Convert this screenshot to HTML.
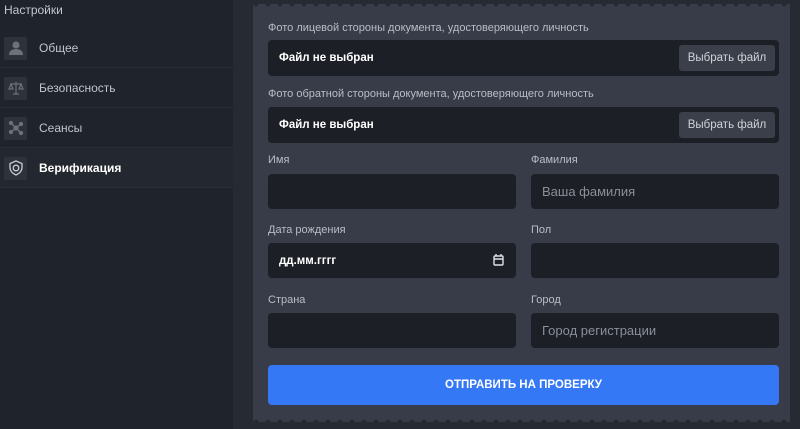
<!DOCTYPE html>
<html><head><meta charset="utf-8"><style>
*{box-sizing:border-box;margin:0;padding:0}
body{width:800px;height:429px;overflow:hidden;background:#262a33;font-family:"Liberation Sans",sans-serif;position:relative}
.sb{position:absolute;left:0;top:0;width:233px;height:429px;background:#1f232b}
.sb h1{font-size:12px;font-weight:normal;color:#c3c7cf;position:absolute;left:4px;top:3px}
.it{position:absolute;left:0;width:233px;height:40px;border-bottom:1px solid #2a2e37;display:flex;align-items:center;font-size:12px;color:#c0c4cc;padding-top:1px}
.it.a{background:#23272f;color:#fff;font-weight:bold}
.ic{width:23px;height:23px;background:#2e323b;border-radius:2px;margin:0 12px 0 4px;display:flex;align-items:center;justify-content:center}
.pn{position:absolute;left:253px;top:4px;width:537px;height:418px;background:#373c48}
.sc{position:absolute;left:253px;width:537px;height:6px;background:radial-gradient(circle at 3px 3px,#262a33 2.2px,transparent 2.6px) 0 0/12px 6px repeat-x}
.lb{position:absolute;font-size:11px;color:#b9bdc6}
.in{position:absolute;background:#1c1f26;border-radius:4px;height:35px;color:#8a8f99;font-size:13px;display:flex;align-items:center;padding-left:11px}
.fi{color:#fff;font-weight:bold;font-size:11.5px}
.bt{position:absolute;right:4px;top:5px;height:26px;width:96px;background:#3a3f4a;border-radius:3px;color:#d0d3d9;font-size:11.5px;display:flex;align-items:center;justify-content:center;font-weight:normal}
.sub{position:absolute;left:268px;top:365px;width:511px;height:40px;background:#3478f6;border-radius:4px;color:#fff;font-weight:bold;font-size:11.5px;display:flex;align-items:center;justify-content:center}
</style></head><body>
<div class="sb"><h1>Настройки</h1>
<div class="it" style="top:28px"><div class="ic"><svg width="16" height="16" viewBox="0 0 16 16"><circle cx="8" cy="5" r="3.5" fill="#6c717b"/><path d="M1 15c0-4 3-6 7-6s7 2 7 6z" fill="#6c717b"/></svg></div>Общее</div>
<div class="it" style="top:68px"><div class="ic"><svg width="16" height="16" viewBox="0 0 16 16" fill="none" stroke="#6c717b" stroke-width="1.2"><path d="M8 2v12M3 4h10M5 14h6M3 4l-2 5h4zM13 4l-2 5h4z"/></svg></div>Безопасность</div>
<div class="it" style="top:108px"><div class="ic"><svg width="16" height="16" viewBox="0 0 16 16" stroke="#6c717b" stroke-width="1.3" fill="#6c717b"><path d="M8 8L3 3M8 8l5-4M8 8l-5 4M8 8l5 5"/><circle cx="8" cy="8" r="2"/><circle cx="3" cy="3" r="1.5"/><circle cx="13" cy="4" r="1.5"/><circle cx="3" cy="12" r="1.5"/><circle cx="13" cy="13" r="1.5"/></svg></div>Сеансы</div>
<div class="it a" style="top:148px"><div class="ic"><svg width="16" height="16" viewBox="0 0 16 16" fill="none" stroke="#c9ccd2" stroke-width="1.3"><path d="M8 1l6 2.5v4c0 3.5-2.7 6-6 7.5C4.7 13.5 2 11 2 7.5v-4z"/><circle cx="8" cy="8" r="2.8"/></svg></div>Верификация</div>
</div>
<div class="pn"></div>
<div class="sc" style="top:1px"></div>
<div class="sc" style="top:419px"></div>
<div class="lb" style="left:268px;top:22px">Фото лицевой стороны документа, удостоверяющего личность</div>
<div class="in fi" style="left:268px;top:40px;width:511px;height:36px">Файл не выбран<div class="bt">Выбрать файл</div></div>
<div class="lb" style="left:268px;top:88px">Фото обратной стороны документа, удостоверяющего личность</div>
<div class="in fi" style="left:268px;top:107px;width:511px;height:36px">Файл не выбран<div class="bt">Выбрать файл</div></div>
<div class="lb" style="left:268px;top:154px">Имя</div>
<div class="lb" style="left:531px;top:154px">Фамилия</div>
<div class="in" style="left:268px;top:174px;width:248px"></div>
<div class="in" style="left:531px;top:174px;width:248px">Ваша фамилия</div>
<div class="lb" style="left:268px;top:224px">Дата рождения</div>
<div class="lb" style="left:531px;top:224px">Пол</div>
<div class="in fi" style="left:268px;top:243px;width:248px">дд.мм.гггг<svg style="position:absolute;right:12px;top:11px" width="11" height="12" viewBox="0 0 11 12" fill="none" stroke="#dfe1e5" stroke-width="1.4"><rect x="1" y="2" width="9" height="9" rx="1"/><path d="M1 5h9M3 0v2M8 0v2"/></svg></div>
<div class="in" style="left:531px;top:243px;width:248px"></div>
<div class="lb" style="left:268px;top:294px">Страна</div>
<div class="lb" style="left:531px;top:294px">Город</div>
<div class="in" style="left:268px;top:313px;width:248px"></div>
<div class="in" style="left:531px;top:313px;width:248px">Город регистрации</div>
<div class="sub">ОТПРАВИТЬ НА ПРОВЕРКУ</div>
</body></html>
